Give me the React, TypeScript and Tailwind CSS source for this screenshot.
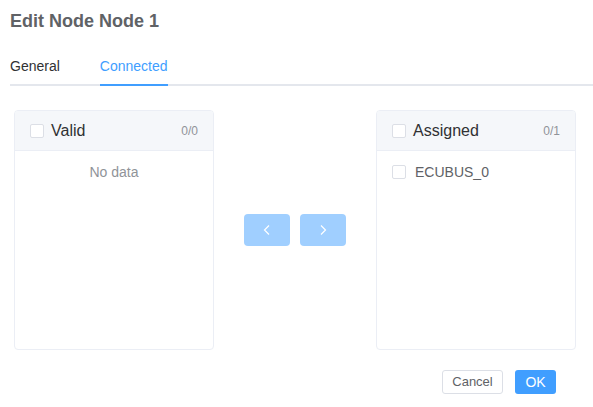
import React from "react";

// 체크박스 모양 (Element UI 스타일)
const Box = () => (
  <span className="inline-block w-[14px] h-[14px] border border-[#dcdfe6] rounded-[2px] bg-white shrink-0" />
);

const Chevron = ({ dir }: { dir: "left" | "right" }) => (
  <svg width="12" height="12" viewBox="0 0 12 12" fill="none">
    {dir === "left" ? (
      <path d="M8 1.5L3.5 6L8 10.5" stroke="white" strokeWidth="1.2" />
    ) : (
      <path d="M4 1.5L8.5 6L4 10.5" stroke="white" strokeWidth="1.2" />
    )}
  </svg>
);

type PanelProps = {
  title: string;
  count: string;
  items: string[];
};

const Panel: React.FC<PanelProps> = ({ title, count, items }) => (
  <div className="w-[200px] h-[240px] border border-[#ebeef5] rounded-[4px] overflow-hidden flex flex-col bg-white">
    <div className="h-[40px] bg-[#f5f7fa] border-b border-[#ebeef5] pl-[15px] pr-[15px] flex items-center">
      <Box />
      <span className="ml-[7px] text-[16px] text-[#303133]">{title}</span>
      <span className="ml-auto text-[12px] text-[#909399]">{count}</span>
    </div>
    <div className="pt-[6px]">
      {items.length === 0 ? (
        <div className="h-[30px] leading-[30px] text-center text-[14px] text-[#909399]">
          No data
        </div>
      ) : (
        items.map((it) => (
          <div key={it} className="h-[30px] pl-[15px] flex items-center">
            <Box />
            <span className="ml-[9px] text-[14px] text-[#606266]">{it}</span>
          </div>
        ))
      )}
    </div>
  </div>
);

export default function App() {
  return (
    <div
      className="w-[593px] h-[407px] bg-white overflow-hidden"
      style={{ fontFamily: '"Liberation Sans", Arial, sans-serif' }}
    >
      {/* 제목 */}
      <div className="pt-[9px] pl-[10px] h-[33px] leading-[24px] text-[18px] font-bold text-[#606266]">
        Edit Node Node 1
      </div>

      {/* 탭 */}
      <div className="mt-[15px] ml-[10px] relative">
        <div className="flex h-[36px] items-center text-[14px]">
          <div className="pr-[20px] text-[#303133]">General</div>
          <div className="px-[20px] text-[#409eff] relative h-full flex items-center">
            Connected
          </div>
        </div>
        <div className="h-[2px] bg-[#e4e7ed] relative">
          <div className="absolute left-[90px] top-0 w-[68px] h-[2px] bg-[#409eff]" />
        </div>
      </div>

      {/* 트랜스퍼 */}
      <div className="mt-[24px] pl-[14px] flex items-center">
        <Panel title="Valid" count="0/0" items={[]} />
        <div className="mx-[30px] flex gap-[10px]">
          <button className="w-[46px] h-[32px] rounded-[4px] bg-[#a0cfff] flex items-center justify-center">
            <Chevron dir="left" />
          </button>
          <button className="w-[46px] h-[32px] rounded-[4px] bg-[#a0cfff] flex items-center justify-center">
            <Chevron dir="right" />
          </button>
        </div>
        <Panel title="Assigned" count="0/1" items={["ECUBUS_0"]} />
      </div>

      {/* 하단 버튼 */}
      <div className="mt-[20px] pr-[37px] flex justify-end gap-[12px]">
        <button className="w-[61px] h-[24px] border border-[#dcdfe6] rounded-[3px] bg-white text-[13px] text-[#606266]">
          Cancel
        </button>
        <button className="w-[41px] h-[24px] rounded-[3px] bg-[#409eff] text-[14px] text-white">
          OK
        </button>
      </div>
    </div>
  );
}
